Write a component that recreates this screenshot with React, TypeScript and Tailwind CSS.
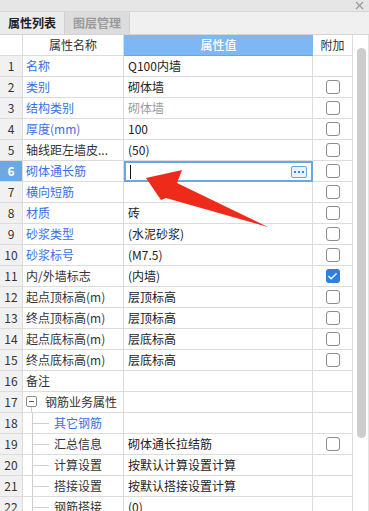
import { Check } from 'lucide-react';

type Row = {
  name: string;
  value?: string;
  blue?: boolean;
  gray?: boolean;
  box?: boolean;
  checked?: boolean;
  child?: boolean;
  group?: boolean;
  editing?: boolean;
};

const rows: Row[] = [
  { name: '名称', value: 'Q100内墙', blue: true },
  { name: '类别', value: '砌体墙', blue: true, box: true },
  { name: '结构类别', value: '砌体墙', blue: true, gray: true, box: true },
  { name: '厚度(mm)', value: '100', blue: true, box: true },
  { name: '轴线距左墙皮...', value: '(50)', box: true },
  { name: '砌体通长筋', blue: true, box: true, editing: true },
  { name: '横向短筋', blue: true, box: true },
  { name: '材质', value: '砖', blue: true, box: true },
  { name: '砂浆类型', value: '(水泥砂浆)', blue: true, box: true },
  { name: '砂浆标号', value: '(M7.5)', blue: true, box: true },
  { name: '内/外墙标志', value: '(内墙)', box: true, checked: true },
  { name: '起点顶标高(m)', value: '层顶标高', box: true },
  { name: '终点顶标高(m)', value: '层顶标高', box: true },
  { name: '起点底标高(m)', value: '层底标高', box: true },
  { name: '终点底标高(m)', value: '层底标高', box: true },
  { name: '备注' },
  { name: '钢筋业务属性', group: true },
  { name: '其它钢筋', blue: true, child: true },
  { name: '汇总信息', value: '砌体通长拉结筋', child: true, box: true },
  { name: '计算设置', value: '按默认计算设置计算', child: true },
  { name: '搭接设置', value: '按默认搭接设置计算', child: true },
  { name: '钢筋搭接', value: '(0)', child: true },
];

function CheckBox({ checked }: { checked?: boolean }) {
  if (checked) {
    return (
      <span className="w-[14px] h-[14px] rounded-[3px] bg-[#2f7fe3] flex items-center justify-center">
        <Check className="w-[11px] h-[11px] text-white" strokeWidth={3} />
      </span>
    );
  }
  return <span className="w-[14px] h-[14px] rounded-[3px] border border-[#8c8c8c] bg-white" />;
}

export default function App() {
  return (
    <div className="relative w-[369px] h-[511px] overflow-hidden bg-white flex flex-col font-['Noto_Sans_CJK_SC',sans-serif] text-[12px] text-[#333]">
      {/* title strip */}
      <div className="h-[12px] shrink-0 bg-[#e6e6e6] border-b border-[#d6d6d6] flex items-center justify-end pr-[5px]">
        <svg width="9" height="9" viewBox="0 0 9 9" className="text-[#9a9a9a]">
          <path d="M1 1L8 8M8 1L1 8" stroke="currentColor" strokeWidth="1.2" />
        </svg>
      </div>

      {/* tabs */}
      <div className="h-[23px] shrink-0 bg-[#f0f0f0] border-b border-[#d4d4d4] flex">
        <div className="w-[65px] bg-[#ebebeb] border-r border-[#d0d0d0] flex items-center justify-center font-semibold text-[#222]">
          属性列表
        </div>
        <div className="w-[65px] bg-[#dddddd] border-r border-[#d0d0d0] flex items-center justify-center font-semibold text-[#9b9b9b]">
          图层管理
        </div>
      </div>

      <div className="flex flex-1 min-h-0">
        <div className="w-[353px] shrink-0">
          {/* header */}
          <div className="grid grid-cols-[23px_101px_189px_40px] h-[21px]">
            <div className="border-r border-b border-[#dcdcdc]" />
            <div className="border-r border-b border-[#dcdcdc] flex items-center justify-center">属性名称</div>
            <div className="bg-[#7db8f4] border-b border-[#6aa5e6] flex items-center justify-center text-white font-medium">属性值</div>
            <div className="border-r border-b border-[#dcdcdc] flex items-center justify-center">附加</div>
          </div>

          {rows.map((r, i) => (
            <div key={i} className="grid grid-cols-[23px_101px_189px_40px] h-[21px]">
              <div
                className={`border-r border-b border-[#dcdcdc] flex items-center justify-center ${
                  r.editing ? 'bg-[#6ea7e2] text-white font-semibold' : 'bg-[#f1f1f1] text-[#333]'
                }`}
              >
                {i + 1}
              </div>

              <div className="border-r border-b border-[#dcdcdc] flex items-center overflow-hidden whitespace-nowrap">
                {r.child ? (
                  <>
                    <span className="ml-[9px] w-[17px] h-full border-l border-[#cfcfcf] flex items-center shrink-0">
                      <span className="w-full border-t border-[#cfcfcf]" />
                    </span>
                    <span className={`ml-[5px] ${r.blue ? 'text-[#3a6ee8]' : 'text-[#333]'}`}>{r.name}</span>
                  </>
                ) : r.group ? (
                  <>
                    <span className="ml-[3px] h-full flex flex-col items-center shrink-0">
                      <span className="h-[4px]" />
                      <span className="w-[11px] h-[11px] border border-[#8c8c8c] rounded-[2px] flex items-center justify-center">
                        <span className="w-[5px] border-t border-[#555]" />
                      </span>
                      <span className="flex-1 border-l border-[#cfcfcf]" />
                    </span>
                    <span className="ml-[8px]">{r.name}</span>
                  </>
                ) : (
                  <span className={`pl-[3px] ${r.blue ? 'text-[#3a6ee8]' : 'text-[#333]'}`}>{r.name}</span>
                )}
              </div>

              {r.editing ? (
                <div className="border-2 border-[#6aa5e6] flex items-center justify-between pl-[4px] pr-[4px]">
                  <span className="w-px h-[14px] bg-[#111]" />
                  <span className="w-[16px] h-[12px] rounded-[2px] border border-[#6aa5e6] bg-[#eaf2fc] flex items-center justify-center gap-[2px]">
                    <span className="w-[2px] h-[2px] bg-[#3b82e0]" />
                    <span className="w-[2px] h-[2px] bg-[#3b82e0]" />
                    <span className="w-[2px] h-[2px] bg-[#3b82e0]" />
                  </span>
                </div>
              ) : (
                <div
                  className={`border-r border-b border-[#dcdcdc] flex items-center pl-[4px] whitespace-nowrap overflow-hidden ${
                    r.gray ? 'text-[#9a9a9a]' : 'text-[#222]'
                  }`}
                >
                  {r.value}
                </div>
              )}

              <div className="border-r border-b border-[#dcdcdc] flex items-center justify-center">
                {r.box && <CheckBox checked={r.checked} />}
              </div>
            </div>
          ))}
        </div>

        {/* scrollbar */}
        <div className="w-[16px] shrink-0 border-r border-[#e2e2e2] pt-[13px] pl-[4px]">
          <div className="w-[9px] h-[390px] rounded-full bg-[#cdcdcd]" />
        </div>
      </div>

      {/* red annotation arrow */}
      <svg className="absolute inset-0 pointer-events-none" width="369" height="511" viewBox="0 0 369 511">
        <polygon points="146,178 182,170 177,183 268,227 166,198 161,200" fill="#ee2a1b" />
      </svg>
    </div>
  );
}
